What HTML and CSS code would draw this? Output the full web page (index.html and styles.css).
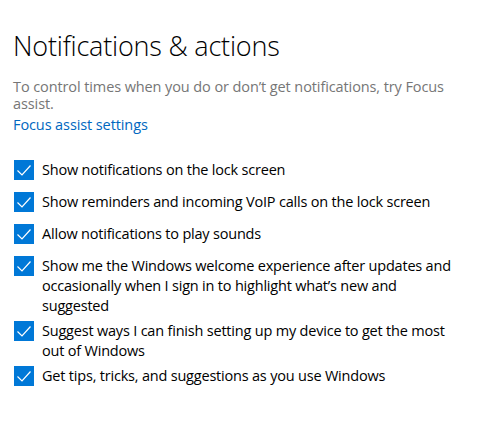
FILE: index.html
```html
<!DOCTYPE html>
<html lang="en">
<head>
<meta charset="utf-8">
<link rel="stylesheet" href="styles.css">
</head>
<body>
<main class="page">
  <h1 class="title">Notifications &amp; actions</h1>
  <p class="desc">To control times when you do or don’t get notifications, try Focus assist.</p>
  <a class="link" href="#">Focus assist settings</a>
  <ul class="options">
    <li class="option"><span class="box"><svg viewBox="0 0 20 20" width="20" height="20"><path d="M3.5 10.5 L8 15 L16.5 5.5" fill="none" stroke="#fff" stroke-width="1.2"/></svg></span><span class="label">Show notifications on the lock screen</span></li>
    <li class="option"><span class="box"><svg viewBox="0 0 20 20" width="20" height="20"><path d="M3.5 10.5 L8 15 L16.5 5.5" fill="none" stroke="#fff" stroke-width="1.2"/></svg></span><span class="label">Show reminders and incoming VoIP calls on the lock screen</span></li>
    <li class="option"><span class="box"><svg viewBox="0 0 20 20" width="20" height="20"><path d="M3.5 10.5 L8 15 L16.5 5.5" fill="none" stroke="#fff" stroke-width="1.2"/></svg></span><span class="label">Allow notifications to play sounds</span></li>
    <li class="option"><span class="box"><svg viewBox="0 0 20 20" width="20" height="20"><path d="M3.5 10.5 L8 15 L16.5 5.5" fill="none" stroke="#fff" stroke-width="1.2"/></svg></span><span class="label">Show me the Windows welcome experience after updates and occasionally when I sign in to highlight what’s new and suggested</span></li>
    <li class="option"><span class="box"><svg viewBox="0 0 20 20" width="20" height="20"><path d="M3.5 10.5 L8 15 L16.5 5.5" fill="none" stroke="#fff" stroke-width="1.2"/></svg></span><span class="label">Suggest ways I can finish setting up my device to get the most out of Windows</span></li>
    <li class="option"><span class="box"><svg viewBox="0 0 20 20" width="20" height="20"><path d="M3.5 10.5 L8 15 L16.5 5.5" fill="none" stroke="#fff" stroke-width="1.2"/></svg></span><span class="label">Get tips, tricks, and suggestions as you use Windows</span></li>
  </ul>
</main>
</body>
</html>
```
FILE: styles.css
```css
html, body {
  margin: 0;
  padding: 0;
  background: #fff;
}
body {
  font-family: "Open Sans", "Noto Sans", sans-serif;
  color: #000;
}
.page {
  padding: 28px 0 0 13px;
  width: 447px;
}
.title {
  margin: 0;
  font-weight: 300;
  font-size: 27px;
  line-height: 36px;
  letter-spacing: -0.2px;
  color: #000;
}
.desc {
  margin: 14px 0 0 0;
  font-size: 14.5px;
  line-height: 17px;
  color: #767676;
  letter-spacing: -0.1px;
}
.link {
  display: block;
  margin-top: 3px;
  font-size: 14.5px;
  line-height: 20px;
  color: #0067c0;
  text-decoration: none;
  letter-spacing: -0.1px;
}
.options {
  list-style: none;
  margin: 25px 0 0 0;
  padding: 0 0 0 1px;
}
.option {
  display: flex;
  align-items: flex-start;
  gap: 8px;
  min-height: 32px;
}
.box {
  flex: none;
  width: 20px;
  height: 20px;
  background: #0078d7;
  display: flex;
}
.label {
  font-size: 14.5px;
  line-height: 20px;
  padding-bottom: 5px;
  letter-spacing: -0.2px;
}
```
